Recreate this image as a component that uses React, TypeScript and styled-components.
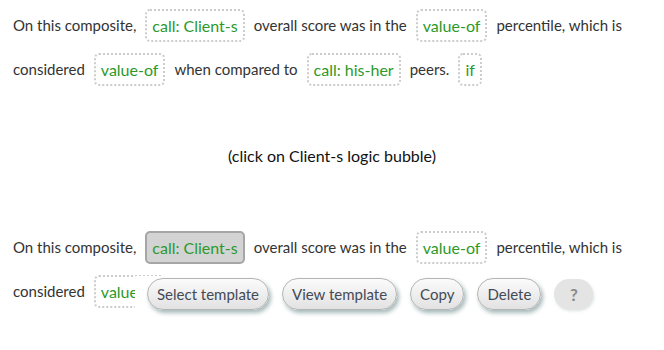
import styled, { createGlobalStyle } from "styled-components";

const GlobalStyle = createGlobalStyle`
  body {
    margin: 0;
    background: #ffffff;
    font-family: Lato, "Open Sans", sans-serif;
    color: #333333;
  }
`;

type lineType = { kind: "text" | "bubble"; value: string }[];

const firstLine: lineType = [
  { kind: "text", value: "On this composite," },
  { kind: "bubble", value: "call: Client-s" },
  { kind: "text", value: "overall score was in the" },
  { kind: "bubble", value: "value-of" },
  { kind: "text", value: "percentile, which is" },
];

const secondLine: lineType = [
  { kind: "text", value: "considered" },
  { kind: "bubble", value: "value-of" },
  { kind: "text", value: "when compared to" },
  { kind: "bubble", value: "call: his-her" },
  { kind: "text", value: "peers." },
  { kind: "bubble", value: "if" },
];

const menuItems = ["Select template", "View template", "Copy", "Delete"];

const App = () => {
  return (
    <Page>
      <GlobalStyle />
      <Sentence>
        <Line>
          {firstLine.map((item, i) =>
            item.kind === "text" ? (
              <Words key={i}>{item.value}</Words>
            ) : (
              <Bubble key={i}>{item.value}</Bubble>
            )
          )}
        </Line>
        <Line>
          {secondLine.map((item, i) =>
            item.kind === "text" ? (
              <Words key={i}>{item.value}</Words>
            ) : (
              <Bubble key={i}>{item.value}</Bubble>
            )
          )}
        </Line>
      </Sentence>

      <Caption>(click on Client-s logic bubble)</Caption>

      <Sentence>
        <Line>
          {firstLine.map((item, i) =>
            item.kind === "text" ? (
              <Words key={i}>{item.value}</Words>
            ) : (
              <Bubble key={i} $selected={i === 1}>
                {item.value}
              </Bubble>
            )
          )}
        </Line>
        <Line>
          <Words>considered</Words>
          <Bubble>value-of</Bubble>
        </Line>
        <Menu>
          {menuItems.map((label) => (
            <MenuButton key={label}>{label}</MenuButton>
          ))}
          <HelpButton>?</HelpButton>
        </Menu>
      </Sentence>
    </Page>
  );
};

const Page = styled.div`
  padding: 3px 13px 0;
  width: 664px;
  height: 350px;
  box-sizing: border-box;
  overflow: hidden;
`;

const Sentence = styled.div`
  position: relative;
  display: flex;
  flex-direction: column;
`;

const Line = styled.div`
  display: flex;
  align-items: center;
  gap: 9px;
  height: 44px;
  font-size: 15px;
  white-space: nowrap;
`;

const Words = styled.span`
  color: #333333;
`;

const Bubble = styled.span<{ $selected?: boolean }>`
  display: inline-flex;
  align-items: center;
  height: 33px;
  box-sizing: border-box;
  border-radius: 5px;
  font-size: 16px;
  color: #2b9a2b;
  border: ${(p) => (p.$selected ? "2px solid #a6a6a6" : "2px dotted #cccccc")};
  background: ${(p) => (p.$selected ? "#d3d3d3" : "transparent")};
  padding: 0 5px;
`;

const Caption = styled.div`
  margin: 54px 0 58px;
  height: 22px;
  line-height: 22px;
  text-align: center;
  font-size: 16px;
  color: #111111;
`;

const Menu = styled.div`
  position: absolute;
  left: 122px;
  top: 51px;
  display: flex;
  align-items: center;
  gap: 13px;
  padding: 0 12px;
  height: 36px;
  background: #ffffff;
`;

const MenuButton = styled.button`
  height: 32px;
  padding: 0 9px;
  border-radius: 16px;
  border: 1px solid #b4b4b4;
  background: linear-gradient(#fbfbfb, #e2e2e2);
  box-shadow: 2px 3px 4px rgba(60, 100, 100, 0.45);
  font-family: Lato, "Open Sans", sans-serif;
  font-size: 15px;
  color: #454a55;
`;

const HelpButton = styled.span`
  display: inline-flex;
  align-items: center;
  justify-content: center;
  width: 39px;
  height: 30px;
  border-radius: 15px;
  background: #e4e4e4;
  color: #8a8a8a;
  font-size: 17px;
  font-weight: 700;
  box-shadow: 1px 2px 3px rgba(120, 140, 140, 0.25);
`;

export default App;
